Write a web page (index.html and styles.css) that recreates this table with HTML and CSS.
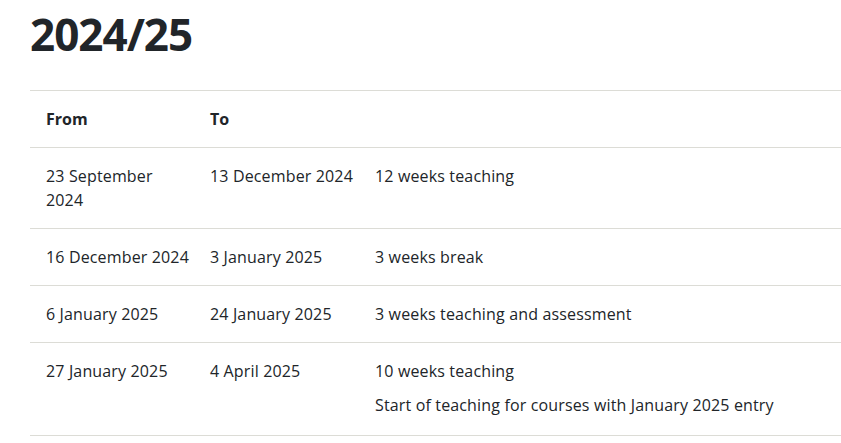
FILE: index.html
```html
<!DOCTYPE html>
<html lang="en">
<head>
<meta charset="utf-8">
<title>2024/25</title>
<link rel="stylesheet" href="styles.css">
</head>
<body>
<main class="page">
  <h2 class="year-title">2024/25</h2>
  <table class="dates">
    <colgroup>
      <col class="col-from">
      <col class="col-to">
      <col class="col-desc">
    </colgroup>
    <thead>
      <tr>
        <th>From</th>
        <th>To</th>
        <th></th>
      </tr>
    </thead>
    <tbody>
      <tr>
        <td>23 September 2024</td>
        <td>13 December 2024</td>
        <td><p>12 weeks teaching</p></td>
      </tr>
      <tr>
        <td>16 December 2024</td>
        <td>3 January 2025</td>
        <td><p>3 weeks break</p></td>
      </tr>
      <tr>
        <td>6 January 2025</td>
        <td>24 January 2025</td>
        <td><p>3 weeks teaching and assessment</p></td>
      </tr>
      <tr>
        <td>27 January 2025</td>
        <td>4 April 2025</td>
        <td class="multi"><p>10 weeks teaching</p><p>Start of teaching for courses with January 2025 entry</p></td>
      </tr>
    </tbody>
  </table>
</main>
</body>
</html>
```
FILE: styles.css
```css
html, body {
  margin: 0;
  padding: 0;
  background: #ffffff;
}
body {
  font-family: "Open Sans", "Noto Sans", sans-serif;
  color: #212529;
  font-size: 16px;
  line-height: 24px;
}
.page {
  padding: 0 0 0 30px;
}
.year-title {
  margin: 0;
  padding-top: 10px;
  font-size: 44px;
  line-height: 48px;
  font-weight: 700;
  letter-spacing: -1px;
  color: #212529;
}
.dates {
  margin-top: 32px;
  width: 811px;
  table-layout: fixed;
  border-collapse: collapse;
  border-top: 1px solid #dcdcd6;
  letter-spacing: 0.15px;
}
.col-from { width: 164px; }
.col-to { width: 165px; }
.dates th,
.dates td {
  text-align: left;
  vertical-align: top;
  padding: 16px 4px 16px 16px;
  border-bottom: 1px solid #dcdcd6;
}
.dates th {
  font-weight: 700;
  letter-spacing: 0;
}
.dates td p {
  margin: 0 0 10px;
}
.dates td p:last-child {
  margin-bottom: 0;
}
.dates td.multi p:last-child {
  margin-bottom: 2px;
}
```
